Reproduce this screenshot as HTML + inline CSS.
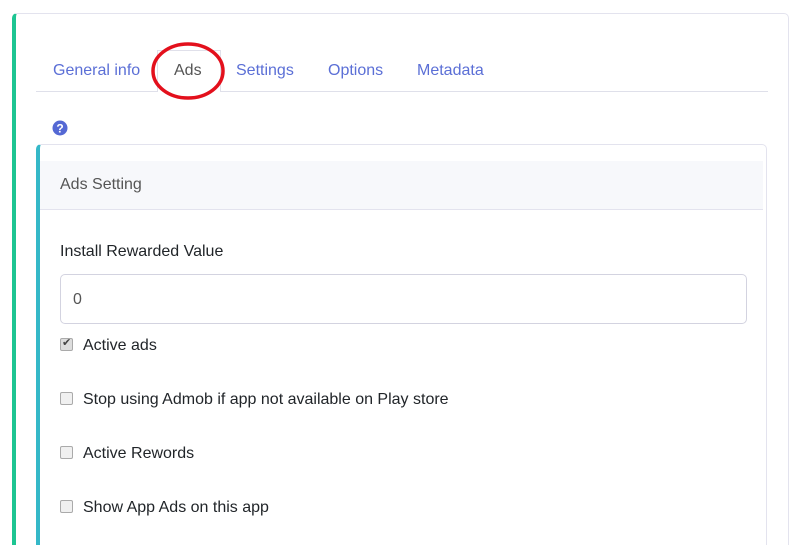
<!DOCTYPE html>
<html style="width:791px;height:545px;overflow:hidden"><head><style>
body{margin:0;background:#fff;font-family:"Liberation Sans",sans-serif;width:791px;height:545px;overflow:hidden;position:relative}
.outer{position:absolute;left:12px;top:13px;width:772px;height:560px;border:1px solid #e3e3ee;border-left:4px solid #1dc592;border-radius:5px}
.tabs{position:absolute;left:36px;top:91px;width:732px;border-top:1px solid #dfe0ea}
.tab{position:absolute;top:62px;font-size:16px;color:#5b6fd6}
.active{position:absolute;left:157px;top:50px;width:62px;height:41px;border:1px solid #e0e0ea;border-bottom:none;background:#fff}
.inner{position:absolute;left:36px;top:144px;width:726px;height:420px;border:1px solid #e3e3ee;border-left:4px solid #35b8c8;border-radius:5px}
.hdr{position:absolute;left:40px;top:161px;width:726px;height:48px;background:#f7f8fb;border-bottom:1px solid #e3e3ee}
.t{position:absolute;font-size:16px;color:#212529}
.inp{position:absolute;left:60px;top:274px;width:685px;height:48px;border:1px solid #d3d3e0;border-radius:5px}
.cb{position:absolute;left:60px;width:11px;height:11px;border:1px solid #aaa;border-radius:2px;background:#f0f0f0}
</style></head><body>
<div class="outer"></div>
<div class="tabs"></div>
<div class="active"></div>
<div class="tab" style="left:53px">General info</div>
<div class="tab" style="left:174px;color:#555">Ads</div>
<div class="tab" style="left:236px">Settings</div>
<div class="tab" style="left:328px">Options</div>
<div class="tab" style="left:417px">Metadata</div>
<svg style="position:absolute;left:150px;top:41px" width="76" height="61"><ellipse cx="38" cy="30" rx="35" ry="27" fill="none" stroke="#e3101c" stroke-width="3.5"/></svg>
<svg style="position:absolute;left:52px;top:120px" width="16" height="16"><circle cx="8" cy="8" r="7.5" fill="#5468d4"/><text x="8" y="12.5" font-size="12" font-weight="bold" fill="#fff" text-anchor="middle" font-family="Liberation Sans">?</text></svg>
<div class="inner"></div>
<div class="hdr" style="width:723px"></div>
<div class="t" style="left:60px;top:176px;color:#555">Ads Setting</div>
<div class="t" style="left:60px;top:243px">Install Rewarded Value</div>
<div class="inp"></div>
<div class="t" style="left:73px;top:291px;color:#555">0</div>
<div class="cb" style="top:338px;background:#ddd"></div>
<div style="position:absolute;left:62px;top:336px;font-size:11px;color:#444">✔</div>
<div class="t" style="left:83px;top:337px">Active ads</div>
<div class="cb" style="top:392px"></div>
<div class="t" style="left:83px;top:391px">Stop using Admob if app not available on Play store</div>
<div class="cb" style="top:446px"></div>
<div class="t" style="left:83px;top:445px">Active Rewords</div>
<div class="cb" style="top:500px"></div>
<div class="t" style="left:83px;top:499px">Show App Ads on this app</div>
</body></html>
